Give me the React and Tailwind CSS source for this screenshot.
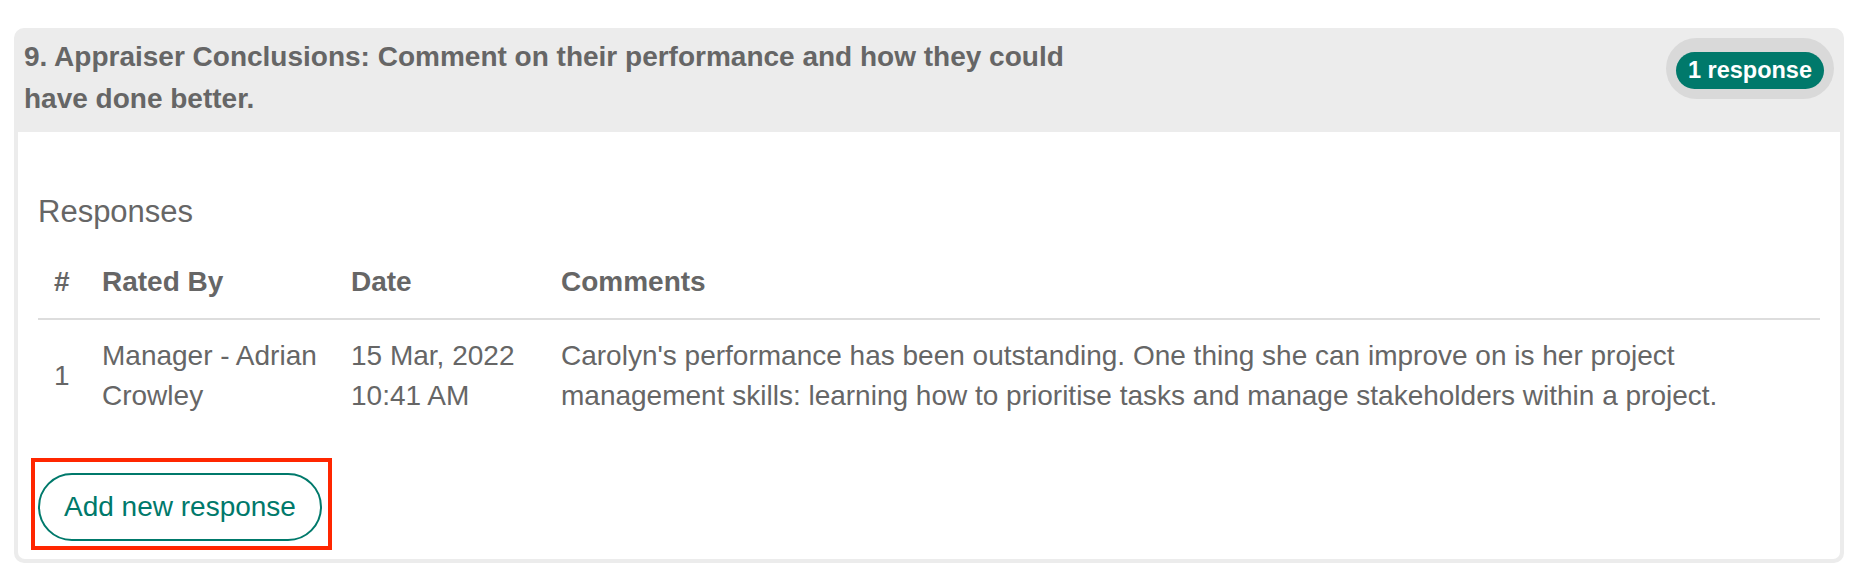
const FONT = { fontFamily: '"Liberation Sans", Arial, Helvetica, sans-serif' };

const COLS = "grid grid-cols-[48px_249px_210px_1fr]";

export default function App() {
  return (
    <div className="min-h-screen bg-white pl-[14px] pr-[20px] pt-[28px]" style={FONT}>
      <div className="rounded-[10px] bg-[#ececec] overflow-hidden">
        {/* Header */}
        <div className="flex items-start justify-between pl-[10px] pr-[10px] pt-[8px] pb-[12px]">
          <h3 className="max-w-[1080px] text-[28px] leading-[42px] font-bold text-[#666]">
            9. Appraiser Conclusions: Comment on their performance and how they could have done better.
          </h3>
          <div className="mt-[2px] rounded-full bg-[#d9d9d9] px-[10px] pt-[14px] pb-[10px]">
            <span className="block rounded-full bg-[#00796b] px-[12px] h-[37px] leading-[37px] text-[23.5px] font-bold text-white whitespace-nowrap">
              1 response
            </span>
          </div>
        </div>

        {/* Body */}
        <div className="mx-[4px] mb-[4px] rounded-b-[7px] bg-white px-[20px] pt-[63px] pb-[18px]">
          <h4 className="text-[31px] leading-[34px] text-[#666] mb-[17px]">Responses</h4>

          <div className={`${COLS} border-b-2 border-[#dddddd] text-[28px] leading-[40px] font-bold text-[#666]`}>
            <div className="px-4 py-4">#</div>
            <div className="px-4 py-4">Rated By</div>
            <div className="px-4 py-4">Date</div>
            <div className="px-4 py-4">Comments</div>
          </div>

          <div className={`${COLS} items-center text-[28px] leading-[40px] text-[#666]`}>
            <div className="px-4 py-4">1</div>
            <div className="px-4 py-4">Manager - Adrian Crowley</div>
            <div className="px-4 py-4">15 Mar, 2022<br />10:41 AM</div>
            <div className="px-4 py-4">
              Carolyn's performance has been outstanding. One thing she can improve on is her project management skills: learning how to prioritise tasks and manage stakeholders within a project.
            </div>
          </div>

          <div className="mt-[41px] flex">
            <div className="relative">
              <button className="rounded-full border-2 border-[#00796b] bg-white px-[24px] py-[12px] text-[28px] leading-[40px] text-[#00796b] whitespace-nowrap">
                Add new response
              </button>
              {/* annotation highlight */}
              <div className="pointer-events-none absolute -left-[7px] -top-[15px] -right-[10px] -bottom-[9px] border-4 border-[#ff2600]" />
            </div>
          </div>
        </div>
      </div>
    </div>
  );
}
